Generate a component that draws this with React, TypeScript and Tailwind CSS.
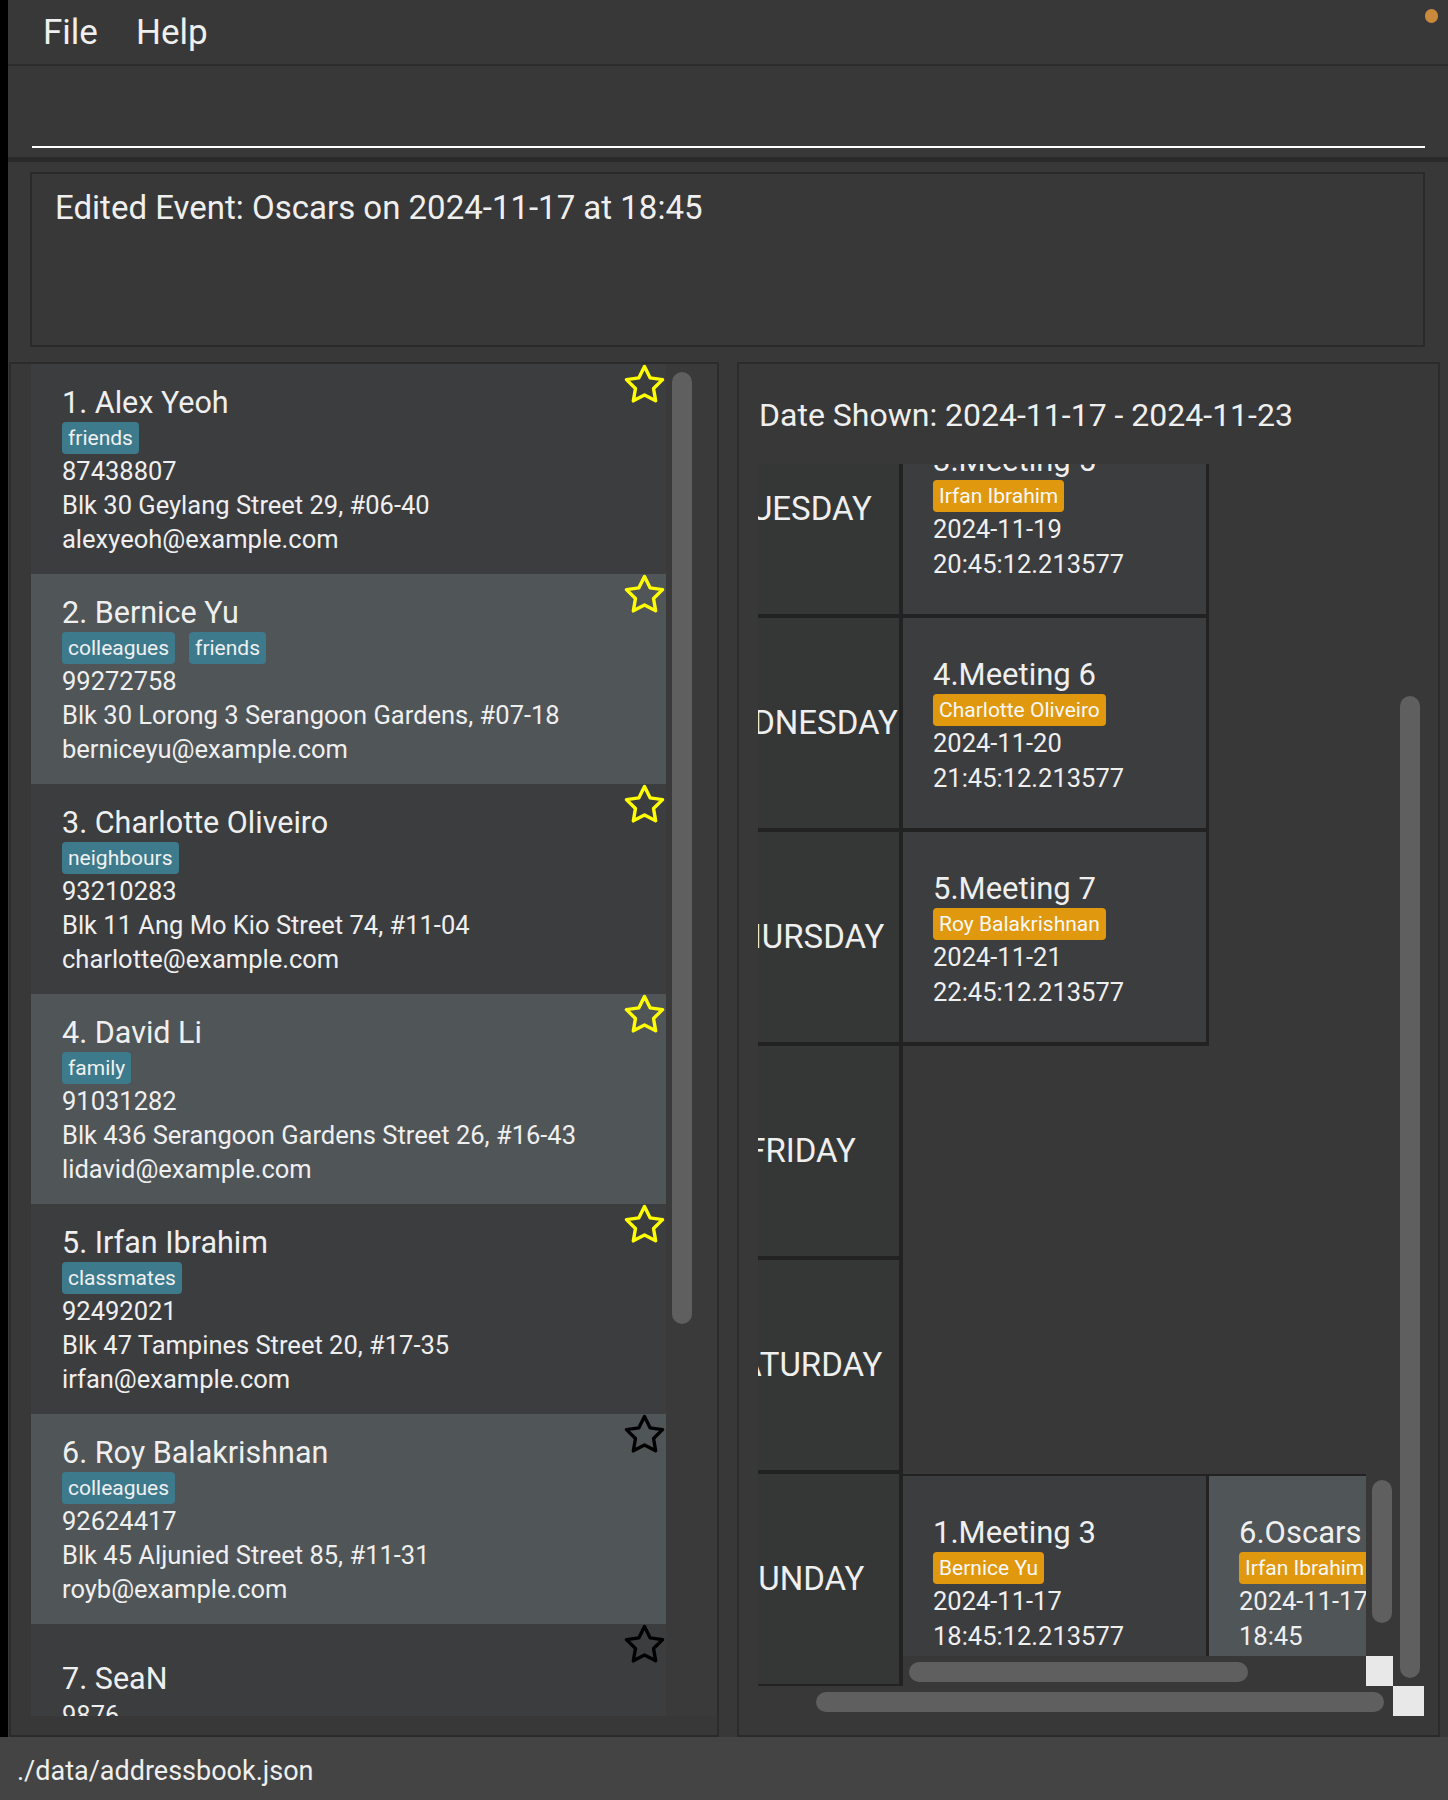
import React from "react";

type Person = {
  name: string;
  tags: string[];
  phone: string;
  address: string;
  email: string;
  fav: boolean;
};

const people: Person[] = [
  { name: "Alex Yeoh", tags: ["friends"], phone: "87438807", address: "Blk 30 Geylang Street 29, #06-40", email: "alexyeoh@example.com", fav: true },
  { name: "Bernice Yu", tags: ["colleagues", "friends"], phone: "99272758", address: "Blk 30 Lorong 3 Serangoon Gardens, #07-18", email: "berniceyu@example.com", fav: true },
  { name: "Charlotte Oliveiro", tags: ["neighbours"], phone: "93210283", address: "Blk 11 Ang Mo Kio Street 74, #11-04", email: "charlotte@example.com", fav: true },
  { name: "David Li", tags: ["family"], phone: "91031282", address: "Blk 436 Serangoon Gardens Street 26, #16-43", email: "lidavid@example.com", fav: true },
  { name: "Irfan Ibrahim", tags: ["classmates"], phone: "92492021", address: "Blk 47 Tampines Street 20, #17-35", email: "irfan@example.com", fav: true },
  { name: "Roy Balakrishnan", tags: ["colleagues"], phone: "92624417", address: "Blk 45 Aljunied Street 85, #11-31", email: "royb@example.com", fav: false },
  { name: "SeaN", tags: [], phone: "9876", address: "Blk 12 Clementi Avenue 3, #02-11", email: "sean@example.com", fav: false },
];

type Ev = { title: string; who: string; date: string; time: string; light?: boolean };

const days: { day: string; events: Ev[] }[] = [
  { day: "TUESDAY", events: [{ title: "3.Meeting 5", who: "Irfan Ibrahim", date: "2024-11-19", time: "20:45:12.213577" }] },
  { day: "WEDNESDAY", events: [{ title: "4.Meeting 6", who: "Charlotte Oliveiro", date: "2024-11-20", time: "21:45:12.213577" }] },
  { day: "THURSDAY", events: [{ title: "5.Meeting 7", who: "Roy Balakrishnan", date: "2024-11-21", time: "22:45:12.213577" }] },
  { day: "FRIDAY", events: [] },
  { day: "SATURDAY", events: [] },
];

const sunday: Ev[] = [
  { title: "1.Meeting 3", who: "Bernice Yu", date: "2024-11-17", time: "18:45:12.213577" },
  { title: "6.Oscars", who: "Irfan Ibrahim", date: "2024-11-17", time: "18:45", light: true },
];

function Star({ color }: { color: string }) {
  return (
    <svg width="41" height="40" viewBox="0 0 40 40" className="shrink-0">
      <polygon
        points="20,2.5 25.58,13.81 38.07,15.63 29.03,24.44 31.17,36.87 20,31 8.83,36.87 10.97,24.44 1.93,15.63 14.42,13.81"
        fill="none"
        stroke={color}
        strokeWidth="3.4"
        strokeLinejoin="round"
      />
    </svg>
  );
}

function PersonCard({ p, i }: { p: Person; i: number }) {
  const bg = i % 2 === 0 ? "bg-[#3c3d3f]" : "bg-[#505558]";
  return (
    <div className={`h-[210px] w-[635px] shrink-0 flex ${bg}`}>
      <div className="flex-1 flex flex-col justify-center pl-[31px] pt-[2px]">
        <div className="text-[30.5px] leading-[38px] whitespace-nowrap">
          {i + 1}. {p.name}
        </div>
        {p.tags.length > 0 && (
          <div className="flex gap-[14px]">
            {p.tags.map((t) => (
              <span key={t} className="h-[32px] px-[6px] rounded-[4px] bg-[#3d7a8c] text-[21px] leading-[32px] text-[#f0f0f0]">
                {t}
              </span>
            ))}
          </div>
        )}
        <div className="text-[25.5px] leading-[34px] whitespace-nowrap">{p.phone}</div>
        <div className="text-[25.5px] leading-[34px] whitespace-nowrap">{p.address}</div>
        <div className="text-[25.5px] leading-[34px] whitespace-nowrap">{p.email}</div>
      </div>
      <div className="pr-[1px]">
        <Star color={p.fav ? "#ffff00" : "#000000"} />
      </div>
    </div>
  );
}

function EventCard({ e }: { e: Ev }) {
  const bg = e.light ? "bg-[#505558]" : "bg-[#3c3d3f]";
  return (
    <div className={`w-[306px] h-[214px] shrink-0 border-r-[3px] border-b-4 border-[#222222] flex flex-col justify-center pl-[30px] pt-[6px] ${bg}`}>
      <div className="text-[31px] leading-[38px] whitespace-nowrap">{e.title}</div>
      <div className="flex">
        <span className="h-[32px] px-[6px] rounded-[4px] bg-[#e0990f] text-[21px] leading-[32px] text-[#f8f8f8] whitespace-nowrap">
          {e.who}
        </span>
      </div>
      <div className="text-[25.5px] leading-[35px] whitespace-nowrap">{e.date}</div>
      <div className="text-[25.5px] leading-[35px] whitespace-nowrap">{e.time}</div>
    </div>
  );
}

function DayCell({ day }: { day: string }) {
  return (
    <div className="w-[206px] h-[214px] shrink-0 border-r-4 border-b-4 border-[#222222] bg-[#353737] flex items-center justify-center pl-[7px] text-[33px] whitespace-nowrap">
      {day}
    </div>
  );
}

export default function App() {
  return (
    <div className="relative w-[1448px] h-[1800px] overflow-hidden bg-[#383838] text-[#efefef] font-[Roboto,sans-serif] flex flex-col">
      <div className="h-[1737px] flex">
        <div className="w-[8px] bg-black shrink-0" />
        <div className="flex-1 flex flex-col">
          {/* menu */}
          <div className="h-[66px] border-b-2 border-[#2c2c2c] flex items-center pl-[35px] gap-[38px] text-[35px] leading-[40px] pt-[2px]">
            <span>File</span>
            <span>Help</span>
          </div>
          {/* command box */}
          <div className="h-[91px] flex flex-col justify-end pb-[9px] pl-[24px] pr-[23px]">
            <div className="h-[2px] bg-white" />
          </div>
          <div className="h-[5px] bg-[#2a2a2a]" />
          {/* result */}
          <div className="h-[196px] pt-[10px] pl-[22px] pr-[23px]">
            <div className="h-[175px] border-2 border-[#2a2a2a] pt-[14px] pl-[23px] text-[33px] leading-[40px] whitespace-nowrap">
              Edited Event: Oscars on 2024-11-17 at 18:45
            </div>
          </div>
          {/* main */}
          <div className="flex-1 flex pt-[4px] pl-[1px] pr-[8px] gap-[18px]">
            {/* left panel */}
            <div className="w-[710px] h-[1375px] border-2 border-[#2b2b2b] pl-[20px]">
              <div className="w-[686px] h-[1352px] bg-[#3a3a3a] flex overflow-hidden">
                <div className="w-[635px] flex flex-col">
                  {people.map((p, i) => (
                    <PersonCard key={i} p={p} i={i} />
                  ))}
                </div>
                <div className="pl-[6px] pt-[8px]">
                  <div className="w-[20px] h-[952px] rounded-[10px] bg-[#5f5f5f]" />
                </div>
              </div>
            </div>
            {/* right panel */}
            <div className="flex-1 h-[1375px] border-2 border-[#2b2b2b] pt-[31px] pl-[19px]">
              <div className="pl-[1px] text-[32px] leading-[40px] whitespace-nowrap">Date Shown: 2024-11-17 - 2024-11-23</div>
              <div className="mt-[29px] w-[666px] flex flex-col">
                <div className="flex h-[1222px]">
                  <div className="w-[635px] h-[1222px] overflow-hidden">
                    <div className="-ml-[61px] -mt-[60px] w-[697px] flex flex-col">
                      {days.map((d) => (
                        <div key={d.day} className="flex h-[214px]">
                          <DayCell day={d.day} />
                          <div className="flex">
                            {d.events.map((e) => (
                              <EventCard key={e.title} e={e} />
                            ))}
                          </div>
                        </div>
                      ))}
                      <div className="flex h-[214px]">
                        <DayCell day="SUNDAY" />
                        <div className="w-[491px] h-[212px] flex flex-col">
                          <div className="flex h-[182px]">
                            <div className="w-[463px] h-[182px] border-t-2 border-[#222222] overflow-hidden flex items-start">
                              {sunday.map((e) => (
                                <EventCard key={e.title} e={e} />
                              ))}
                            </div>
                            <div className="w-[28px] pt-[6px] pl-[6px]">
                              <div className="w-[20px] h-[143px] rounded-[10px] bg-[#5f5f5f]" />
                            </div>
                          </div>
                          <div className="flex h-[30px]">
                            <div className="w-[463px] pt-[6px] pl-[6px]">
                              <div className="w-[339px] h-[20px] rounded-[10px] bg-[#5f5f5f]" />
                            </div>
                            <div className="w-[28px] bg-[#e8e8e8]" />
                          </div>
                        </div>
                      </div>
                    </div>
                  </div>
                  <div className="w-[31px] pl-[7px] pt-[232px]">
                    <div className="w-[20px] h-[982px] rounded-[10px] bg-[#5f5f5f]" />
                  </div>
                </div>
                <div className="flex h-[30px]">
                  <div className="w-[635px] pl-[58px] pt-[6px]">
                    <div className="w-[568px] h-[20px] rounded-[10px] bg-[#5f5f5f]" />
                  </div>
                  <div className="w-[31px] bg-[#e8e8e8]" />
                </div>
              </div>
            </div>
          </div>
        </div>
      </div>
      {/* status bar */}
      <div className="h-[63px] bg-[#444444] pt-[19px] pl-[17px] text-[27px] leading-[30px] whitespace-nowrap">
        ./data/addressbook.json
      </div>
      <div className="absolute top-[9px] left-[1425px] w-[13px] h-[14px] rounded-full bg-[#c98a3c]" />
    </div>
  );
}
